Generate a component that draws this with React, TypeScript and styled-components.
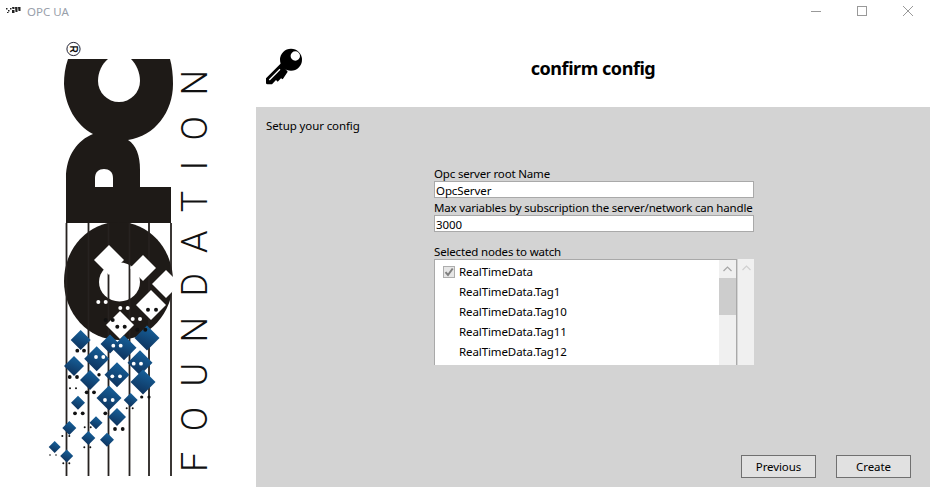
import React from "react";
import styled, { createGlobalStyle } from "styled-components";

const Global = createGlobalStyle`
  html, body { margin: 0; padding: 0; background: #fff; }
  body { font-family: "Noto Sans", "Open Sans", sans-serif; font-size: 11.5px; color: #000; }
  #root { width: 930px; height: 487px; overflow: hidden; }
`;

const Win = styled.div`
  width: 930px; height: 487px; display: flex; flex-direction: column; background: #fff;
`;
const TitleBar = styled.div`
  height: 22px; padding-top: 0; display: flex; align-items: center; flex: none;
`;
const AppIcon = styled.svg`
  width: 16px; height: 16px; margin-left: 5px; flex: none;
`;
const AppTitle = styled.span`
  margin-left: 6px; font-size: 11.5px; letter-spacing: 0; color: #99a0aa;
`;
const WinControls = styled.div`
  margin-left: auto; display: flex; height: 22px; align-items: center;
`;
const WinIcon = styled.svg`
  width: 46px; height: 22px; display: block; stroke: #999; fill: none; stroke-width: 1;
`;
const Body = styled.div`
  flex: 1; display: flex; min-height: 0;
`;
const LeftPane = styled.div`
  width: 256px; flex: none; background: #fff;
`;
const Logo = styled.svg`
  display: block; width: 256px; height: 465px;
`;
const RightPane = styled.div`
  flex: 1; display: flex; flex-direction: column; min-width: 0;
`;
const Header = styled.div`
  height: 85px; flex: none; display: grid; grid-template-columns: 1fr auto 1fr; align-items: center; background: #fff;
`;
const KeyIcon = styled.svg`
  width: 40px; height: 40px; margin-left: 8px; margin-top: 5px; display: block;
`;
const Heading = styled.h1`
  margin: 6px 0 0; font-size: 18px; line-height: 24px; font-weight: 700; letter-spacing: -0.45px;
`;
const Panel = styled.div`
  flex: 1; background: #d3d3d3; display: flex; flex-direction: column; padding: 10px 19px 9px 10px; min-height: 0;
`;
const Hint = styled.div`
  font-size: 11.5px; line-height: 18px; letter-spacing: -0.1px;
`;
const Form = styled.div`
  width: 320px; margin-left: 168px; margin-top: 31px; display: flex; flex-direction: column;
`;
const Label = styled.label<{ $gap?: number }>`
  font-size: 11.5px; line-height: 16px; height: 15px; white-space: nowrap; letter-spacing: -0.17px; margin-top: ${p => p.$gap ?? 0}px;
`;
const Field = styled.div`
  height: 17px; border: 1px solid #a9a9a9; background: #fff; box-sizing: border-box;
  padding: 0 1px; font-size: 11.5px; line-height: 17px; letter-spacing: -0.1px;
`;
const ListRow = styled.div`
  display: flex; gap: 1px; height: 106px;
`;
const ListBox = styled.div`
  width: 303px; box-sizing: border-box; border: 1px solid #a9a9a9; border-bottom: 0; background: #fff; display: flex;
`;
const Items = styled.div`
  flex: 1; padding-top: 1px; min-width: 0;
`;
const Item = styled.div`
  height: 20px; display: flex; align-items: center; padding-left: 24px; position: relative; font-size: 11.5px; letter-spacing: -0.1px;
`;
const Check = styled.svg`
  position: absolute; left: 8px; top: 5px; width: 12px; height: 12px;
`;
const Scroll = styled.div`
  width: 17px; flex: none; background: #f0f0f0; display: flex; flex-direction: column;
`;
const ScrollUp = styled.svg`
  width: 17px; height: 17px; display: block; flex: none; fill: none; stroke: ${(p: { $c?: string }) => p.$c ?? "#a6a6a6"}; stroke-width: 1.2;
`;
const Thumb = styled.div`
  width: 17px; height: 37px; margin-top: 1px; background: #cdcdcd;
`;
const OuterScroll = styled.div`
  width: 16px; background: #f0f0f0; flex: none;
`;
const Buttons = styled.div`
  margin-top: auto; display: flex; justify-content: flex-end; gap: 20px;
`;
const Btn = styled.button`
  width: 75px; height: 23px; box-sizing: border-box; background: #e1e1e1; border: 1px solid #707070; border-radius: 0; padding: 0;
  font-family: inherit; font-size: 11.5px; letter-spacing: -0.1px; color: #000;
`;

const diamonds: [number, number, number][] = [
  [80.7, 340, 10], [96.7, 358.7, 12.5], [74, 366, 10], [90, 380, 10], [110, 344, 9.5], [124, 347.7, 12.5],
  [147, 338, 12.5], [140, 362.7, 12.5], [117, 374.7, 12.5], [143, 382, 12.5], [109, 398, 12.5], [78, 402.7, 7],
  [130.7, 400, 7], [117, 417, 9], [96, 422.7, 6.5], [69.3, 428, 7], [88.3, 438, 7], [107, 439.7, 7], [54.7, 447, 6], [66.7, 456, 6.5],
];
const blackDots: [number, number, number][] = [
  [77.3, 350.7, 1.9], [84, 350.7, 1.9], [69.7, 377, 1.9], [77, 377, 1.9], [86.7, 392.3, 1.9], [94, 392.3, 1.9], [75, 413.3, 1.9], [82.7, 413.3, 1.9],
  [105.3, 413.3, 1.9], [115, 429, 1.9], [122.7, 429, 1.9], [141.7, 397, 1.6], [149, 397, 1.6], [99, 374.7, 1.7],
  [70, 388.3, 1], [76, 388.3, 1], [126.7, 408.3, 1], [132.7, 408.3, 1], [84.7, 427.3, 1], [90.7, 427.3, 1], [62.3, 436, 1], [69.3, 436, 1],
  [84.3, 447.3, 1], [90.3, 447.3, 1], [50, 455, 0.8], [56, 455, 0.8], [63.3, 463.3, 1], [69.3, 463.3, 1],
  [105.7, 320, 2], [112.7, 320, 2], [137.3, 329.7, 2], [145.3, 329.7, 2], [117.3, 326.7, 2], [124.7, 326.7, 2], [148, 309.7, 2], [156, 309.7, 2],
];
const whiteDots: [number, number, number][] = [
  [113.3, 345.7, 1.9], [120.7, 345.7, 1.9], [96, 357, 1.9], [103.3, 357, 1.9], [133.7, 363.7, 1.9], [141, 363.7, 1.9], [112.3, 376.3, 1.9], [120, 376.3, 1.9],
  [105, 400, 1.9], [112.7, 400, 1.9], [98.3, 302, 2], [105.7, 302, 2], [120.3, 308, 2], [127.7, 308, 2], [132.7, 319, 2], [140, 319, 2],
];
const whiteDiamonds: [number, number, number][] = [
  [109, 260, 15], [143, 268, 13], [166, 284, 14], [151, 305, 15], [120, 325, 14],
];
const lineXs = [66.5, 88.5, 108.5, 129.5, 149, 171];

const dm = (x: number, y: number, h: number) => `${x},${y - h} ${x + h},${y} ${x},${y + h} ${x - h},${y}`;

function LogoArt() {
  return (
    <Logo viewBox="0 22 256 465">
      <defs>
        <linearGradient id="blue" x1="0.7" y1="0" x2="0.3" y2="1">
          <stop offset="0" stopColor="#17649f" />
          <stop offset="1" stopColor="#0d2f58" />
        </linearGradient>
      </defs>
      <circle cx="73.5" cy="49" r="6.6" fill="#fff" stroke="#223" strokeWidth="1" />
      <text x="0" y="0" transform="translate(70 49) rotate(90)" textAnchor="middle" fontFamily="Liberation Sans" fontSize="10" fontWeight="700" fill="#111">R</text>
      <path fill="#1e1a17" d="M68 59 C65 67 64 76 64 84 C65 106 76 125 93 134 C78 140 66 155 66 178 L66 223 L171 223 L171 187 L140 187 L140 170 C140 155 136 145 128 140 C155 136 173 112 173 84 C173 75 172 66 170 59 Z" />
      <path fill="#fff" d="M108 59 L131 59 C136 64 140 72 140 81 A21 21 0 0 1 98 81 C98 72 102 64 108 59 Z" />
      <path fill="#fff" d="M95 187 L95 178 C95 172 99 169 104 169 C109 169 113 172 113 178 L113 187 Z" />
      <ellipse cx="118.5" cy="281" rx="54.5" ry="59" fill="#1e1a17" />
      <ellipse cx="119.5" cy="282" rx="20.5" ry="19.5" fill="#fff" />
      {lineXs.map(x => <rect key={x} x={x - 0.9} y="223" width="1.8" height="253" fill="#262220" />)}
      {whiteDiamonds.map(([x, y, h]) => <polygon key={x} points={dm(x, y, h)} fill="#fff" />)}
      <rect x="173.5" y="270" width="10" height="30" fill="#fff" />
      {diamonds.map(([x, y, h]) => <polygon key={`${x}-${y}`} points={dm(x, y, h)} fill="url(#blue)" />)}
      {blackDots.map(([x, y, r]) => <circle key={`${x}-${y}`} cx={x} cy={y} r={r} fill="#111" />)}
      {whiteDots.map(([x, y, r]) => <circle key={`${x}-${y}`} cx={x} cy={y} r={r} fill="#fff" />)}
      <text transform="translate(207 472) rotate(-90)" fontFamily="Roboto, Liberation Sans, sans-serif" fontWeight="300" fontSize="36" fill="#111" textLength="402" lengthAdjust="spacing">FOUNDATION</text>
    </Logo>
  );
}

export default function App() {
  return (
    <Win>
      <Global />
      <TitleBar>
        <AppIcon viewBox="0 0 16 16">
          <g fill="#222">
            <rect x="1" y="5" width="1.5" height="1.5" /><rect x="3" y="7" width="1.5" height="1.5" /><rect x="5" y="5" width="1.5" height="1.5" /><rect x="2" y="9" width="1.5" height="1" />
            <path d="M7 4h2.5v2h-2zM10 4h2.5v5h-2zM13 4h2.5v4h-2z" />
            <rect x="7" y="7" width="2.5" height="3" />
          </g>
        </AppIcon>
        <AppTitle>OPC UA</AppTitle>
        <WinControls>
          <WinIcon viewBox="0 0 46 22"><path d="M19 11.5h10" /></WinIcon>
          <WinIcon viewBox="0 0 46 22"><rect x="19.5" y="6.5" width="9" height="9" /></WinIcon>
          <WinIcon viewBox="0 0 46 22"><path d="M19 6l10 10M29 6L19 16" /></WinIcon>
        </WinControls>
      </TitleBar>
      <Body>
        <LeftPane><LogoArt /></LeftPane>
        <RightPane>
          <Header>
            <KeyIcon viewBox="0 0 40 40">
              <path fillRule="evenodd" fill="#000" d="M38 12.7 A11 11 0 1 1 16 12.7 A11 11 0 1 1 38 12.7 Z M36 9 A4.7 4.7 0 1 0 26.6 9 A4.7 4.7 0 1 0 36 9 Z" />
              <path fill="#000" d="M17 16.3 L2 31.3 L2 36 Q2 37.3 3.5 37.3 L8 37.3 L12 33 L13.7 34.7 L17 31.3 L18.7 32.3 L23.7 24.7 Z" />
              <path stroke="#fff" strokeWidth="1.3" fill="none" d="M5.3 33 L16 22.3" />
            </KeyIcon>
            <Heading>confirm config</Heading>
          </Header>
          <Panel>
            <Hint>Setup your config</Hint>
            <Form>
              <Label>Opc server root Name</Label>
              <Field>OpcServer</Field>
              <Label $gap={2}>Max variables by subscription the server/network can handle</Label>
              <Field>3000</Field>
              <Label $gap={12}>Selected nodes to watch</Label>
              <ListRow>
                <ListBox>
                  <Items>
                    <Item>
                      <Check viewBox="0 0 12 12">
                        <rect x="0.5" y="0.5" width="11" height="11" fill="#e6e6e6" stroke="#adadad" />
                        <path d="M2.5 6.2L5 9L9.7 2.5" fill="none" stroke="#7f7f7f" strokeWidth="2" />
                      </Check>
                      RealTimeData
                    </Item>
                    <Item>RealTimeData.Tag1</Item>
                    <Item>RealTimeData.Tag10</Item>
                    <Item>RealTimeData.Tag11</Item>
                    <Item>RealTimeData.Tag12</Item>
                  </Items>
                  <Scroll>
                    <ScrollUp viewBox="0 0 17 17"><path d="M4.5 11L8.5 7L12.5 11" /></ScrollUp>
                    <Thumb />
                  </Scroll>
                </ListBox>
                <OuterScroll>
                  <ScrollUp $c="#d0d0d0" viewBox="0 0 17 17"><path d="M4.5 11L8.5 7L12.5 11" /></ScrollUp>
                </OuterScroll>
              </ListRow>
            </Form>
            <Buttons>
              <Btn>Previous</Btn>
              <Btn>Create</Btn>
            </Buttons>
          </Panel>
        </RightPane>
      </Body>
    </Win>
  );
}
